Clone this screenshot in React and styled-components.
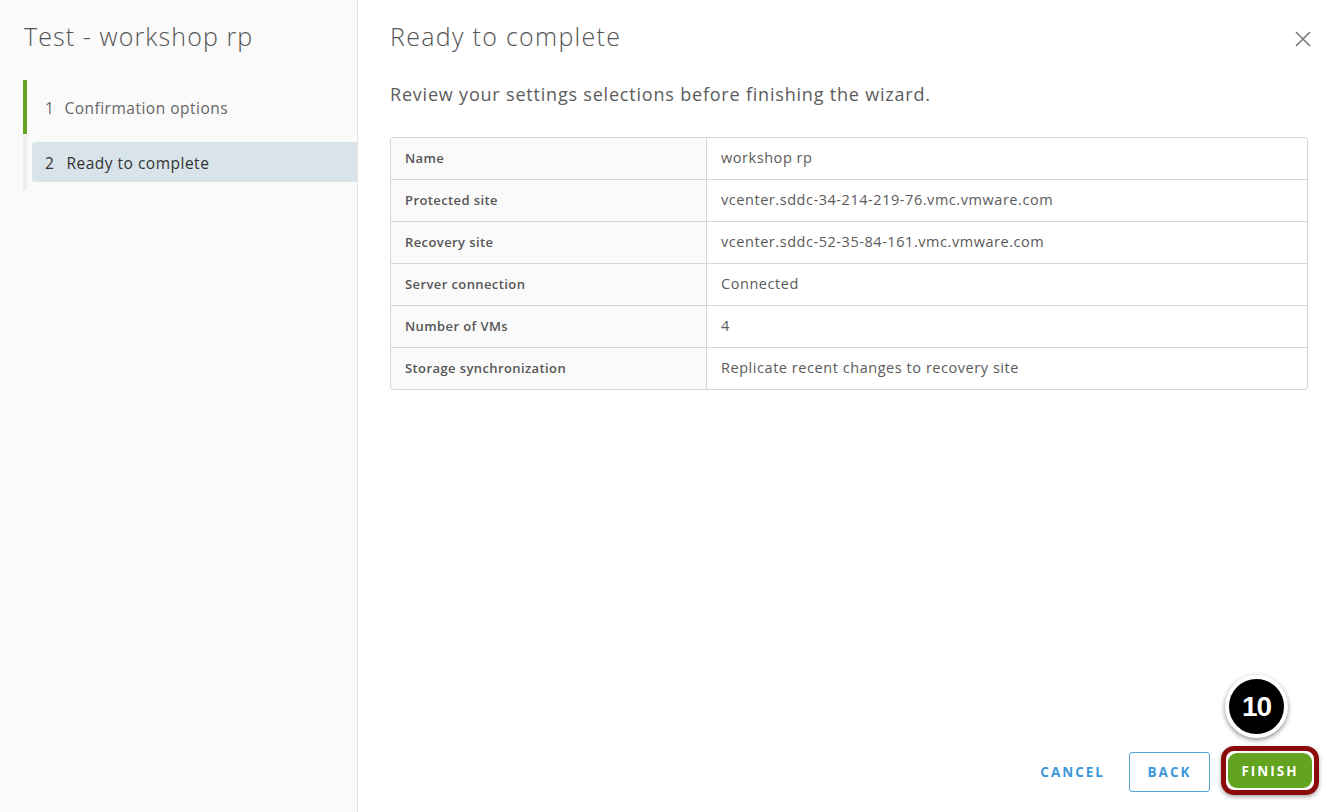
import React from 'react';
import styled, { createGlobalStyle } from 'styled-components';

const GlobalStyle = createGlobalStyle`
  html, body {
    margin: 0;
    padding: 0;
    background: #ffffff;
  }
  body {
    font-family: "Open Sans", Lato, "Liberation Sans", sans-serif;
    color: #565656;
  }
`;

const rows = [
  ['Name', 'workshop rp'],
  ['Protected site', 'vcenter.sddc-34-214-219-76.vmc.vmware.com'],
  ['Recovery site', 'vcenter.sddc-52-35-84-161.vmc.vmware.com'],
  ['Server connection', 'Connected'],
  ['Number of VMs', '4'],
  ['Storage synchronization', 'Replicate recent changes to recovery site'],
];

const steps = [
  { num: 1, label: 'Confirmation options', done: true },
  { num: 2, label: 'Ready to complete', active: true },
];

const Wizard = styled.div`
  display: flex;
  width: 1336px;
  height: 812px;
  overflow: hidden;
`;

const Sidebar = styled.nav`
  width: 358px;
  flex-shrink: 0;
  background: #fafafa;
  border-right: 1px solid #e4e4e4;
  padding-top: 19px;
  box-sizing: border-box;
`;

const SideTitle = styled.h1`
  margin: 0 0 27px 24px;
  font-size: 25px;
  font-weight: 300;
  color: #555555;
  line-height: 34px;
  letter-spacing: 1.1px;
`;

const StepList = styled.ol`
  list-style: none;
  margin: 0 0 0 23px;
  padding: 0 0 8px 0;
  border-left: 4px solid #eeeeee;
`;

const Step = styled.li`
  position: relative;
  display: flex;
  align-items: center;
  height: ${(p) => (p.$active ? '40px' : '54px')};
  margin-bottom: ${(p) => (p.$active ? '0' : '8px')};
  margin-left: ${(p) => (p.$active ? '5px' : '0')};
  padding-left: ${(p) => (p.$active ? '13px' : '18px')};
  padding-top: 1px;
  box-sizing: border-box;
  background: ${(p) => (p.$active ? '#d9e4ea' : 'transparent')};
  border-radius: ${(p) => (p.$active ? '3px 0 0 3px' : '0')};
  font-size: 15.5px;
  letter-spacing: 0.5px;
  color: ${(p) => (p.$active ? '#333333' : '#666666')};

  &::before {
    content: '';
    display: ${(p) => (p.$done ? 'block' : 'none')};
    position: absolute;
    left: -4px;
    top: 0;
    bottom: 0;
    width: 4px;
    background: #62a420;
  }
`;

const StepNum = styled.span`
  margin-right: ${(p) => (p.$wide ? '12px' : '10px')};
`;

const Main = styled.main`
  flex: 1;
  display: flex;
  flex-direction: column;
  padding: 19px 24px 14px 32px;
  box-sizing: border-box;
`;

const Header = styled.div`
  display: flex;
  justify-content: space-between;
  align-items: center;
  height: 34px;
`;

const Title = styled.h2`
  margin: 0;
  font-size: 25px;
  font-weight: 300;
  color: #555555;
  line-height: 34px;
  letter-spacing: 1.3px;
`;

const CloseButton = styled.button`
  border: none;
  background: transparent;
  padding: 0;
  width: 20px;
  height: 20px;
  margin-top: 5px;
  margin-right: -1px;
  cursor: pointer;
  display: flex;
  align-items: center;
  justify-content: center;
`;

const Intro = styled.p`
  margin: 27px 0 29px 0;
  font-size: 18px;
  font-weight: 400;
  line-height: 28px;
  letter-spacing: 0.8px;
  color: #5c5c5c;
`;

const Summary = styled.div`
  margin-right: 4px;
  border: 1px solid #d7d7d7;
  border-radius: 3px;
  overflow: hidden;
`;

const Row = styled.div`
  display: grid;
  grid-template-columns: 316px 1fr;
  height: ${(p) => (p.$first ? '41px' : '42px')};
  border-top: ${(p) => (p.$first ? 'none' : '1px solid #d7d7d7')};
  box-sizing: border-box;
`;

const Label = styled.div`
  background: #fafafa;
  border-right: 1px solid #d7d7d7;
  padding-left: 14px;
  padding-bottom: 2px;
  display: flex;
  align-items: center;
  font-size: 13px;
  font-weight: 600;
  letter-spacing: 0.4px;
  color: #565656;
`;

const Value = styled.div`
  padding-left: 14px;
  padding-bottom: 3px;
  display: flex;
  align-items: center;
  font-size: 14.5px;
  letter-spacing: 0.55px;
  color: #5a5a5a;
`;

const Footer = styled.div`
  margin-top: auto;
  display: flex;
  justify-content: flex-end;
  align-items: center;
`;

const BaseButton = styled.button`
  font-family: inherit;
  font-size: 13.5px;
  font-weight: 700;
  letter-spacing: 2px;
  text-transform: uppercase;
  height: 40px;
  border-radius: 3px;
  cursor: pointer;
  padding: 0 18px;
`;

const FlatButton = styled(BaseButton)`
  background: transparent;
  border: none;
  color: #3f98d8;
  margin-right: 6px;
`;

const OutlineButton = styled(BaseButton)`
  background: #ffffff;
  border: 1px solid #55a6dd;
  color: #3f98d8;
  width: 81px;
  padding: 0;
  margin-right: 11px;
`;

const Highlight = styled.div`
  position: relative;
  border: 5px solid #8b0a0a;
  border-radius: 13px;
  padding: 2px;
  box-shadow: 0 2px 4px rgba(0, 0, 0, 0.35);
  margin-bottom: 3px;
  margin-right: -7px;
`;

const PrimaryButton = styled(BaseButton)`
  display: block;
  background: #62a420;
  border: none;
  color: #ffffff;
  height: 35px;
  width: 84px;
  padding: 0;
  border-radius: 9px;
`;

const StepBadge = styled.div`
  position: absolute;
  left: -1px;
  bottom: calc(100% + 13px);
  width: 55px;
  height: 55px;
  border-radius: 50%;
  background: #000000;
  border: 4px solid #ffffff;
  box-shadow: 0 2px 5px rgba(0, 0, 0, 0.45);
  color: #ffffff;
  font-family: "Liberation Sans", Arial, sans-serif;
  font-weight: 700;
  font-size: 28px;
  display: flex;
  align-items: center;
  justify-content: center;
  letter-spacing: -1px;
`;

export default function App() {
  return (
    <>
      <GlobalStyle />
      <Wizard>
        <Sidebar>
          <SideTitle>Test - workshop rp</SideTitle>
          <StepList>
            {steps.map((s) => (
              <Step key={s.num} $active={s.active} $done={s.done}>
                <StepNum $wide={s.num > 1}>{s.num}</StepNum>
                {s.label}
              </Step>
            ))}
          </StepList>
        </Sidebar>
        <Main>
          <Header>
            <Title>Ready to complete</Title>
            <CloseButton aria-label="Close">
              <svg width="18" height="18" viewBox="0 0 18 18">
                <path d="M2 2 L16 16 M16 2 L2 16" stroke="#7a7a7a" strokeWidth="1.6" fill="none" />
              </svg>
            </CloseButton>
          </Header>
          <Intro>Review your settings selections before finishing the wizard.</Intro>
          <Summary>
            {rows.map(([k, v], i) => (
              <Row key={k} $first={i === 0}>
                <Label>{k}</Label>
                <Value>{v}</Value>
              </Row>
            ))}
          </Summary>
          <Footer>
            <FlatButton>Cancel</FlatButton>
            <OutlineButton>Back</OutlineButton>
            <Highlight>
              <StepBadge>10</StepBadge>
              <PrimaryButton>Finish</PrimaryButton>
            </Highlight>
          </Footer>
        </Main>
      </Wizard>
    </>
  );
}
